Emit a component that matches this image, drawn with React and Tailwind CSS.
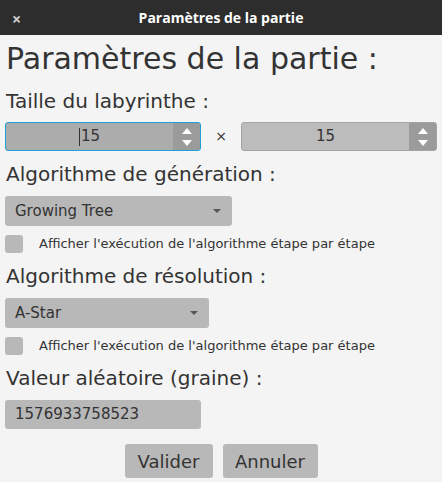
function SpinArrows() {
  return (
    <div className="flex w-[27px] flex-col items-center justify-center gap-[6px] bg-[#9b9b9b]">
      <svg width="10" height="6" viewBox="0 0 10 6">
        <path d="M0 6 L5 0 L10 6 Z" fill="#ffffff" />
      </svg>
      <svg width="10" height="6" viewBox="0 0 10 6">
        <path d="M0 0 L10 0 L5 6 Z" fill="#ffffff" />
      </svg>
    </div>
  );
}

function Spinner({ value, focused }) {
  return (
    <div
      className={
        focused
          ? "flex h-[29px] w-[196px] overflow-hidden rounded-[3px] border border-[#1fa0d8] bg-[#acacac]"
          : "flex h-[29px] w-[196px] overflow-hidden rounded-[3px] border border-[#a4a4a4] bg-[#bcbcbc]"
      }
    >
      <div className="relative flex flex-1 items-center justify-center text-[15px] text-[#333]">
        {focused && <span className="mr-[1px] inline-block h-[18px] w-[1px] bg-[#333]" />}
        {value}
      </div>
      <SpinArrows />
    </div>
  );
}

function Combo({ label, width }) {
  return (
    <div
      className={`flex h-[30px] items-center justify-between rounded-[3px] bg-[#b8b8b8] pl-[10px] pr-[11px] text-[15px] text-[#333] ${width}`}
    >
      <span>{label}</span>
      <svg width="8" height="4" viewBox="0 0 8 4">
        <path d="M0 0 L8 0 L4 4 Z" fill="#555" />
      </svg>
    </div>
  );
}

function Check() {
  return (
    <div className="flex h-[18px] items-center">
      <div className="h-[18px] w-[18px] rounded-[3px] bg-[#b8b8b8]" />
      <span className="ml-[16px] text-[13px] text-[#333]">
        Afficher l'exécution de l'algorithme étape par étape
      </span>
    </div>
  );
}

export default function App() {
  return (
    <div
      className="h-[482px] w-[442px] overflow-hidden bg-[#f4f4f4]"
      style={{ fontFamily: '"DejaVu Sans", Verdana, sans-serif' }}
    >
      <div className="relative flex h-[35px] items-center justify-center bg-[#2d2d2d]">
        <span
          className="absolute left-[12px] top-[7px] text-[16px] font-bold text-[#cfcfcf]"
          style={{ fontFamily: '"Open Sans", sans-serif' }}
        >
          ×
        </span>
        <span
          className="text-[14px] font-bold text-white"
          style={{ fontFamily: '"Open Sans", sans-serif' }}
        >
          Paramètres de la partie
        </span>
      </div>

      <div className="flex flex-col px-[5px]">
        <h1 className="mt-[6px] h-[36px] pl-[1px] text-[30px] leading-[36px] text-[#333]">
          Paramètres de la partie :
        </h1>

        <div className="mt-[12px] h-[24px] pl-[1px] text-[20px] leading-[24px] text-[#333]">
          Taille du labyrinthe :
        </div>
        <div className="mt-[9px] flex items-center">
          <Spinner value="15" focused />
          <span className="w-[40px] text-center text-[14px] text-[#333]">×</span>
          <Spinner value="15" />
        </div>

        <div className="mt-[11px] h-[24px] pl-[1px] text-[20px] leading-[24px] text-[#333]">
          Algorithme de génération :
        </div>
        <div className="mt-[10px]">
          <Combo label="Growing Tree" width="w-[227px]" />
        </div>
        <div className="mt-[9px]">
          <Check />
        </div>

        <div className="mt-[11px] h-[24px] pl-[1px] text-[20px] leading-[24px] text-[#333]">
          Algorithme de résolution :
        </div>
        <div className="mt-[10px]">
          <Combo label="A-Star" width="w-[204px]" />
        </div>
        <div className="mt-[9px]">
          <Check />
        </div>

        <div className="mt-[11px] h-[24px] pl-[1px] text-[20px] leading-[24px] text-[#333]">
          Valeur aléatoire (graine) :
        </div>
        <div className="mt-[10px] flex h-[29px] w-[196px] items-center rounded-[3px] bg-[#b8b8b8] pl-[10px] text-[15px] text-[#333]">
          1576933758523
        </div>

        <div className="mt-[15px] flex justify-center gap-[10px]">
          <button className="h-[34px] w-[88px] rounded-[3px] bg-[#b8b8b8] text-[18px] text-[#333]">
            Valider
          </button>
          <button className="h-[34px] w-[95px] rounded-[3px] bg-[#b8b8b8] text-[18px] text-[#333]">
            Annuler
          </button>
        </div>
      </div>
    </div>
  );
}
